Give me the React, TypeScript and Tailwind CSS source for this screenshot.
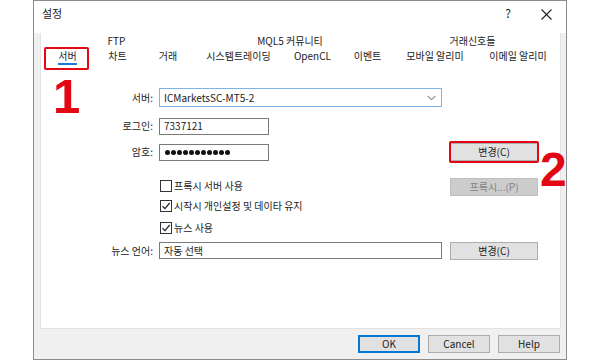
import React from "react";

const tabsBack = [
  { label: "FTP", w: "w-[49px]" },
  { label: "MQL5 커뮤니티", w: "w-[298px]" },
  { label: "거래신호들", w: "w-[67px]" },
];

const tabsFront = [
  { label: "서버", w: "w-[49px]", active: true },
  { label: "차트", w: "w-[51px]" },
  { label: "거래", w: "w-[50px]" },
  { label: "시스템트레이딩", w: "w-[91px]" },
  { label: "OpenCL", w: "w-[57px]" },
  { label: "이벤트", w: "w-[53px]" },
  { label: "모바일 알리미", w: "w-[82px]" },
  { label: "이메일 알리미", w: "w-[84px]" },
];

function Checkbox({ checked, label }: { checked?: boolean; label: string }) {
  return (
    <div className="flex items-center gap-[2px] pl-[1px]">
      <div className="w-[12px] h-[12px] border border-[#333333] bg-white flex items-center justify-center">
        {checked && (
          <svg width="10" height="10" viewBox="0 0 10 10" fill="none" stroke="#222" strokeWidth="1.2">
            <path d="M1.5 5.2 L4 7.6 L8.6 2" />
          </svg>
        )}
      </div>
      <span>{label}</span>
    </div>
  );
}

function WinButton({ children, disabled, className = "" }: { children: React.ReactNode; disabled?: boolean; className?: string }) {
  return (
    <div
      className={
        "h-[18px] flex items-center justify-center border " +
        (disabled ? "bg-[#cccccc] border-[#bfbfbf] text-[#838383] " : "bg-[#e1e1e1] border-[#adadad] text-[#222] ") +
        className
      }
    >
      {children}
    </div>
  );
}

export default function App() {
  return (
    <div className="w-[600px] h-[360px] bg-white font-['Noto_Sans_CJK_KR','Noto_Sans',sans-serif] text-[10px] text-[#222] leading-none">
      <div className="ml-[33px] w-[534px] h-[360px] border border-[#8c8c8c] bg-[#f0f0f0] flex flex-col">
        {/* title bar */}
        <div className="h-[32px] bg-white flex items-start pt-[7px] pl-[8px]">
          <span className="text-[11px]">설정</span>
          <span className="ml-auto mr-[30px] text-[12px] -mt-[1px]">?</span>
          <svg className="mr-[14px] mt-[1px]" width="11" height="11" viewBox="0 0 11 11" stroke="#222" strokeWidth="1.1">
            <path d="M0.5 0.5 L10.5 10.5 M10.5 0.5 L0.5 10.5" />
          </svg>
        </div>

        {/* body */}
        <div className="flex h-[296px]">
          <div className="w-[6px]" />
          <div className="relative w-[521px] bg-white border border-[#e3e3e3] border-t-0">
            {/* tab headers */}
            <div className="h-[32px]">
              <div className="flex h-[15px] items-center pl-[51px]">
                {tabsBack.map((t) => (
                  <div key={t.label} className={t.w + " text-center"}>{t.label}</div>
                ))}
              </div>
              <div className="flex pl-[2px]">
                {tabsFront.map((t) => (
                  <div key={t.label} className={t.w + " flex flex-col items-center"}>
                    <div className="h-[15px] flex items-center">{t.label}</div>
                    {t.active && <div className="w-[19px] h-[2px] bg-[#1a79d4]" />}
                  </div>
                ))}
              </div>
            </div>

            {/* form */}
            <div className="mt-[22px] flex flex-col">
              <div className="flex items-center h-[21px]">
                <div className="w-[112px] text-right">서버:</div>
                <div className="ml-[6px] w-[283px] h-[19px] border border-[#7eb4ea] flex items-center pl-[4px] pr-[5px]">
                  <span>ICMarketsSC-MT5-2</span>
                  <svg className="ml-auto" width="9" height="6" viewBox="0 0 9 6" fill="none" stroke="#555" strokeWidth="1">
                    <path d="M0.5 0.8 L4.5 4.8 L8.5 0.8" />
                  </svg>
                </div>
              </div>

              <div className="flex items-center h-[20px] mt-[8px]">
                <div className="w-[112px] text-right">로그인:</div>
                <div className="ml-[6px] w-[110px] h-[17px] border border-[#7a7a7a] flex items-center pl-[4px]">7337121</div>
              </div>

              <div className="flex items-center h-[20px] mt-[6px]">
                <div className="w-[112px] text-right">암호:</div>
                <div className="ml-[6px] w-[110px] h-[17px] border border-[#7a7a7a] flex items-center gap-[1px] pl-[5px]">
                  {Array.from({ length: 11 }).map((_, i) => (
                    <span key={i} className="w-[5px] h-[5px] rounded-full bg-[#111]" />
                  ))}
                </div>
                <div className="relative ml-[181px]">
                  <WinButton className="w-[88px]">변경(C)</WinButton>
                  <div className="absolute -left-[1px] -right-[1px] -top-[2px] -bottom-[2px] border-2 border-[#e30613] rounded-[2px]" />
                </div>
              </div>

              <div className="flex items-center h-[20px] mt-[15px]">
                <div className="w-[118px]" />
                <div className="w-[283px] -mt-[3px]">
                  <Checkbox label="프록시 서버 사용" />
                </div>
                <WinButton disabled className="ml-[8px] w-[88px]">프록시...(P)</WinButton>
              </div>

              <div className="flex items-center h-[18px]">
                <div className="w-[118px]" />
                <Checkbox checked label="시작시 개인설정 및 데이타 유지" />
              </div>

              <div className="flex items-center h-[18px] mt-[4px]">
                <div className="w-[118px]" />
                <Checkbox checked label="뉴스 사용" />
              </div>

              <div className="flex items-center h-[19px] mt-[4px]">
                <div className="w-[112px] text-right">뉴스 언어:</div>
                <div className="ml-[6px] w-[283px] h-[17px] border border-[#7a7a7a] flex items-center pl-[4px]">자동 선택</div>
                <WinButton className="ml-[8px] w-[88px]">변경(C)</WinButton>
              </div>
            </div>

            {/* annotations */}
            <div className="absolute left-[3px] top-[14px] w-[45px] h-[23px] border-2 border-[#e30613] rounded-[2px]" />
            <div className="absolute left-[12px] top-[39px] font-['Liberation_Sans',sans-serif] font-bold text-[49px] leading-[48px] text-[#e30613]">1</div>
            <div className="absolute left-[499px] top-[113px] font-['Liberation_Sans',sans-serif] font-bold text-[48px] leading-[48px] text-[#e30613]">2</div>
          </div>
          <div className="w-[5px]" />
        </div>

        {/* footer */}
        <div className="h-[30px] flex items-center justify-end pr-[6px] gap-[8px]">
          <div className="w-[62px] h-[18px] flex items-center justify-center bg-[#e1e1e1] border-2 border-[#0078d7]">OK</div>
          <WinButton className="w-[62px]">Cancel</WinButton>
          <WinButton className="w-[62px]">Help</WinButton>
        </div>
      </div>
    </div>
  );
}
